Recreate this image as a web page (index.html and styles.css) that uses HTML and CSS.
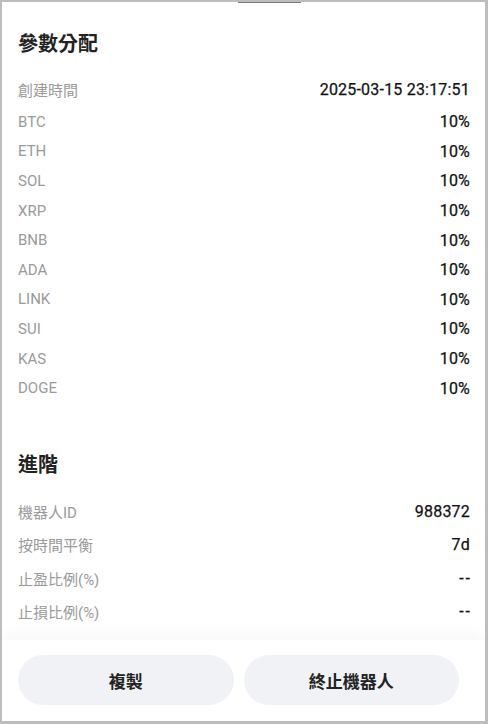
FILE: index.html
```html
<!DOCTYPE html>
<html lang="zh-Hant">
<head>
<meta charset="UTF-8">
<meta name="viewport" content="width=device-width, initial-scale=1.0">
<title>參數分配</title>
<link rel="stylesheet" href="styles.css">
</head>
<body>

<div class="frame">
<div class="handle"></div>

<div class="content">

<div class="section">
<h3>參數分配</h3>
<div class="row first"><span class="label">創建時間</span><span class="value">2025-03-15 23:17:51</span></div>
<div class="row"><span class="label">BTC</span><span class="value">10%</span></div>
<div class="row"><span class="label">ETH</span><span class="value">10%</span></div>
<div class="row"><span class="label">SOL</span><span class="value">10%</span></div>
<div class="row"><span class="label">XRP</span><span class="value">10%</span></div>
<div class="row"><span class="label">BNB</span><span class="value">10%</span></div>
<div class="row"><span class="label">ADA</span><span class="value">10%</span></div>
<div class="row"><span class="label">LINK</span><span class="value">10%</span></div>
<div class="row"><span class="label">SUI</span><span class="value">10%</span></div>
<div class="row"><span class="label">KAS</span><span class="value">10%</span></div>
<div class="row"><span class="label">DOGE</span><span class="value">10%</span></div>
</div>

<div class="section advanced">
<h3>進階</h3>
<div class="row"><span class="label">機器人ID</span><span class="value">988372</span></div>
<div class="row"><span class="label">按時間平衡</span><span class="value">7d</span></div>
<div class="row"><span class="label">止盈比例(%)</span><span class="value empty">--</span></div>
<div class="row"><span class="label">止損比例(%)</span><span class="value empty">--</span></div>
</div>

</div>

<div class="footer">
<button class="btn">複製</button>
<button class="btn">終止機器人</button>
</div>

</div>

</body>
</html>
```

FILE: styles.css
```css
*{
    box-sizing:border-box;
}

body{
    margin:0;
    font-family:Roboto, "Noto Sans CJK TC", sans-serif;
    background:#fff;
}

.frame{
    position:relative;
    width:488px;
    height:724px;
    border-style:solid;
    border-color:#bdbdbd;
    border-width:2px 3px 3px 2px;
    display:flex;
    flex-direction:column;
    overflow:hidden;
    background:#fff;
}

.handle{
    position:absolute;
    top:-2px;
    left:236px;
    width:63px;
    height:3px;
    background:#7a7a7a;
}

.content{
    flex:1;
    overflow:hidden;
    padding:0 15px 0 16px;
}

.section h3{
    margin:0;
    font-size:20px;
    line-height:26px;
    font-weight:700;
    color:#222;
}

.section:first-child h3{
    margin-top:29px;
    margin-bottom:18px;
}

.advanced h3{
    margin-top:49px;
    margin-bottom:17px;
}

.row{
    display:flex;
    justify-content:space-between;
    align-items:center;
    height:29.6px;
    font-size:15px;
}

.row.first{
    margin-bottom:2.4px;
}

.advanced .row{
    height:33.3px;
}

.label{
    color:#9a9a9a;
}

.value{
    color:#111;
    font-size:16px;
    font-weight:400;
    letter-spacing:0.2px;
    -webkit-text-stroke:0.25px #111;
}

.value.empty{
    letter-spacing:2px;
    margin-right:-2px;
}

.footer{
    display:flex;
    gap:10px;
    padding:15px 26px 16px 16px;
    background:#fff;
    box-shadow:0 -6px 14px rgba(0,0,0,0.035);
    position:relative;
}

.btn{
    flex:1;
    height:50px;
    border:none;
    border-radius:25px;
    background:#f0f2f5;
    color:#222;
    font-family:Roboto, "Noto Sans CJK TC", sans-serif;
    font-size:17px;
    font-weight:700;
}
```
